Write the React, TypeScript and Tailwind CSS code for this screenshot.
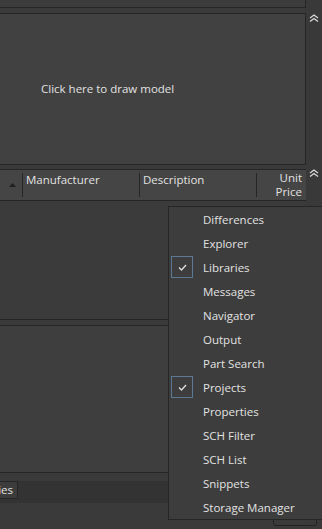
import { FC } from "react";

const items = [
  "Differences",
  "Explorer",
  "Libraries",
  "Messages",
  "Navigator",
  "Output",
  "Part Search",
  "Projects",
  "Properties",
  "SCH Filter",
  "SCH List",
  "Snippets",
  "Storage Manager",
];

const checked = ["Libraries", "Projects"];

const Chevrons: FC = () => (
  <svg width="10" height="8" viewBox="0 0 10 8" fill="none" stroke="#d8d8d8" strokeWidth="1.3">
    <path d="M1 4 L5 1 L9 4" />
    <path d="M1 7.5 L5 4.5 L9 7.5" />
  </svg>
);

const App: FC = () => {
  return (
    <div
      className="relative w-[322px] h-[529px] overflow-hidden flex bg-[#3a3a3a] text-[#e2e2e2] text-[11.5px]"
      style={{ fontFamily: '"Open Sans", "Noto Sans", sans-serif' }}
    >
      {/* main column */}
      <div className="w-[306px] flex flex-col">
        <div className="h-[8px] bg-[#3c3c3c] border-b border-r border-[#262626]" />
        <div className="h-[5px]" />
        <div className="h-[152px] bg-[#414141] border-y border-r border-[#262626] flex items-center pl-[41px]">
          Click here to draw model
        </div>
        <div className="h-[4px]" />
        {/* table header */}
        <div className="h-[32px] bg-[#454545] border-y border-[#262626] flex">
          <div className="w-[22px] flex items-center justify-center pl-[2px]">
            <svg width="7" height="4" viewBox="0 0 7 4">
              <path d="M0 4 L3.5 0 L7 4 Z" fill="#1f1f1f" />
            </svg>
          </div>
          <div className="w-[117px] border-l border-[#262626] my-[3px] pl-[3px] leading-[13px]">
            Manufacturer
          </div>
          <div className="w-[117px] border-l border-[#262626] my-[3px] pl-[3px] leading-[13px]">
            Description
          </div>
          <div className="flex-1 border-l border-[#262626] my-[3px] pr-[4px] text-right leading-[14px]">
            <div className="-mt-[2px]">
              Unit
              <br />
              Price
            </div>
          </div>
        </div>
        <div className="h-[119px] bg-[#3b3b3b] border-b border-[#262626]" />
        <div className="h-[5px]" />
        <div className="h-[148px] bg-[#3e3e3e] border-y border-[#262626]" />
        <div className="h-[8px]" />
        <div className="h-[22px] bg-[#333333] flex">
          <div className="w-[18px] h-[18px] bg-[#3c3c3c] border border-l-0 border-[#262626] rounded-br-[2px] overflow-hidden flex justify-end items-center pr-[4px]">
            <span className="whitespace-nowrap">ies</span>
          </div>
        </div>
        <div className="flex-1" />
      </div>

      {/* right strip */}
      <div className="flex-1 flex flex-col items-center bg-[#393939]">
        <div className="mt-[14px]">
          <Chevrons />
        </div>
        <div className="mt-[147px]">
          <Chevrons />
        </div>
      </div>

      {/* button peeking under menu */}
      <div className="absolute left-[273px] top-[510px] w-[44px] h-[16px] bg-[#3a3a3a] border border-[#222222] rounded-[3px]" />

      {/* panels menu */}
      <div className="absolute left-[168px] top-[206px] w-[160px] bg-[#3d3d3d] border border-[#262626] flex flex-col">
        {items.map((item) => (
          <div key={item} className="relative h-[24px] flex items-center pl-[34px] pt-[2px]">
            {checked.includes(item) && (
              <div className="absolute left-[2px] top-[1px] w-[22px] h-[22px] border border-[#5b7895] flex items-center justify-center">
                <svg width="9" height="7" viewBox="0 0 9 7" fill="none" stroke="#e0e0e0" strokeWidth="1.3">
                  <path d="M1 3.5 L3.5 6 L8 1" />
                </svg>
              </div>
            )}
            <span>{item}</span>
          </div>
        ))}
      </div>
    </div>
  );
};

export default App;
